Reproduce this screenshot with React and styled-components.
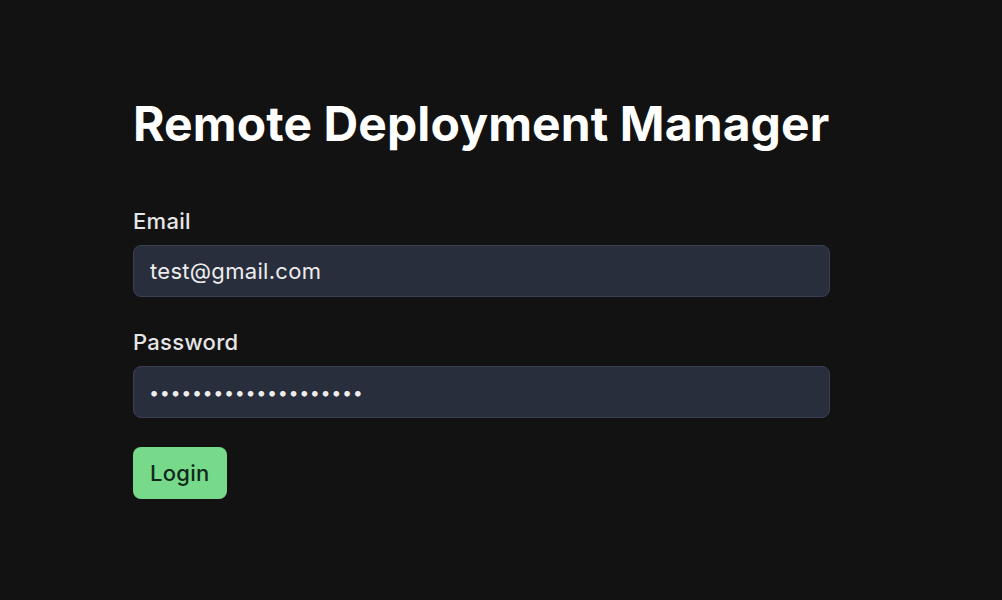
import React from 'react';
import styled, { createGlobalStyle } from 'styled-components';

const GlobalStyle = createGlobalStyle`
html, body {
  margin: 0;
  padding: 0;
  background: #121212;
}
body {
  font-family: Inter, 'Liberation Sans', sans-serif;
  color: #ececec;
}
`

const Page = styled.div`
min-height: 600px;
padding: 95px 0 0 133px;
box-sizing: border-box;
`

const Form = styled.form`
width: 697px;
display: flex;
flex-direction: column;
`

const Title = styled.h1`
margin: 0 0 54px 0;
font-size: 48px;
line-height: 58px;
font-weight: 700;
color: #ffffff;
letter-spacing: 0.1px;
white-space: nowrap;
`

const Field = styled.div`
display: flex;
flex-direction: column;
gap: 10px;
margin-bottom: 31px;
`

const Label = styled.label`
font-size: 22px;
line-height: 28px;
font-weight: 500;
color: #e6e6e6;
letter-spacing: 0.3px;
`

const Input = styled.input`
box-sizing: border-box;
width: 100%;
height: 52px;
padding: 0 16px 0 ${props => (props.type === 'password' ? '15px' : '16px')};
background: #292e3c;
border: 1px solid #3a4052;
border-radius: 8px;
color: #ededed;
font-family: Inter, 'Liberation Sans', sans-serif;
font-size: ${props => (props.type === 'password' ? '18px' : '22px')};
outline: none;
letter-spacing: ${props => (props.type === 'password' ? '0.6px' : '0.3px')};
`

const Button = styled.button`
align-self: flex-start;
margin-top: -2px;
height: 52px;
padding: 0 17px;
background: #77d98a;
border: none;
border-radius: 8px;
color: #10281a;
font-family: Inter, 'Liberation Sans', sans-serif;
font-size: 22px;
font-weight: 500;
letter-spacing: 0.3px;
cursor: pointer;
`

export default function App() {
    return (
        <Page>
            <GlobalStyle />
            <Form onSubmit={e => e.preventDefault()}>
                <Title>Remote Deployment Manager</Title>
                <Field>
                    <Label>Email</Label>
                    <Input type="email" defaultValue="test@gmail.com" />
                </Field>
                <Field>
                    <Label>Password</Label>
                    <Input type="password" defaultValue="testpassword12345678" />
                </Field>
                <Button type="submit">Login</Button>
            </Form>
        </Page>
    );
}
